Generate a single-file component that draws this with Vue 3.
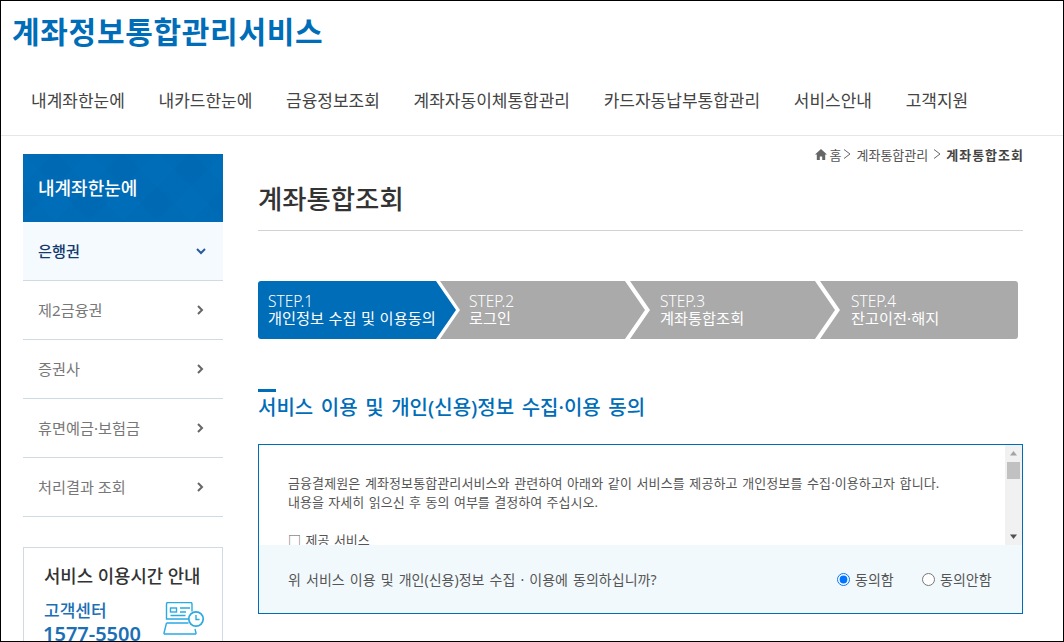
<script setup>
const nav = ['내계좌한눈에', '내카드한눈에', '금융정보조회', '계좌자동이체통합관리', '카드자동납부통합관리', '서비스안내', '고객지원']
const side = ['제2금융권', '증권사', '휴면예금·보험금', '처리결과 조회']
const steps = [
  { no: 'STEP.1', name: '개인정보 수집 및 이용동의', cls: 's1' },
  { no: 'STEP.2', name: '로그인', cls: 's2' },
  { no: 'STEP.3', name: '계좌통합조회', cls: 's3' },
  { no: 'STEP.4', name: '잔고이전·해지', cls: 's4' }
]
</script>

<template>
  <div class="page">
    <header class="head">
      <h1 class="brand">계좌정보통합관리서비스</h1>
      <nav class="gnb">
        <a v-for="n in nav" :key="n">{{ n }}</a>
      </nav>
    </header>
    <div class="body">
      <aside class="side">
        <div class="side-title">내계좌한눈에</div>
        <div class="side-item on">
          <span>은행권</span>
          <svg class="down" width="10" height="7" viewBox="0 0 10 7"><path d="M1 1l4 4 4-4" fill="none" stroke="#2a5a9c" stroke-width="2"/></svg>
        </div>
        <div v-for="s in side" :key="s" class="side-item">
          <span>{{ s }}</span>
          <svg class="right" width="7" height="10" viewBox="0 0 7 10"><path d="M1 1l4 4-4 4" fill="none" stroke="#666" stroke-width="2"/></svg>
        </div>
        <div class="info">
          <div class="info-title">서비스 이용시간 안내</div>
          <div class="info-row">
            <div class="info-text">
              <div class="info-label">고객센터</div>
              <div class="info-num">1577-5500</div>
            </div>
            <svg class="info-icon" width="42" height="34" viewBox="0 0 42 34" fill="none" stroke="#29abe2" stroke-width="1.4">
              <path d="M26 17H3.5V2a1.5 1.5 0 0 1 1.5-1.5h22.5A1.5 1.5 0 0 1 29 2v7.5"/>
              <rect x="7.5" y="6" width="6" height="4"/>
              <path d="M17 6h10M17 10h6M7.5 13.5h15"/>
              <path d="M3.5 21h22M3.5 21L1 31a.8.8 0 0 0 .8 1h30.4a.8.8 0 0 0 .8-1l-1-4"/>
              <circle cx="33" cy="17" r="7.2" stroke-width="1.7"/>
              <path d="M33 13v4.5h3.5"/>
            </svg>
          </div>
        </div>
      </aside>
      <main class="main">
        <div class="crumb">
          <svg width="12" height="11" viewBox="0 0 12 11"><path d="M6 0L0 5.5h1.8V11h3V7.5h2.4V11h3V5.5H12z" fill="#666"/></svg>
          <span class="home">홈</span>
          <svg class="sep" width="8" height="10" viewBox="0 0 8 10"><path d="M1 .5L7 5 1 9.5" fill="none" stroke="#666"/></svg>
          <span>계좌통합관리</span>
          <svg class="sep" width="8" height="10" viewBox="0 0 8 10"><path d="M1 .5L7 5 1 9.5" fill="none" stroke="#666"/></svg>
          <b>계좌통합조회</b>
        </div>
        <h2 class="title">계좌통합조회</h2>
        <div class="steps">
          <div v-for="st in steps" :key="st.no" class="step" :class="st.cls">
            <div class="no">{{ st.no }}</div>
            <div class="nm">{{ st.name }}</div>
          </div>
        </div>
        <div class="mark"></div>
        <h3 class="sub">서비스 이용 및 개인(신용)정보 수집·이용 동의</h3>
        <section class="agree">
          <div class="scrollbox">
            <div class="terms">
              <p class="lead">금융결제원은 계좌정보통합관리서비스와 관련하여 아래와 같이 서비스를 제공하고 개인정보를 수집·이용하고자 합니다.</p>
              <p>내용을 자세히 읽으신 후 동의 여부를 결정하여 주십시오.</p>
              <p class="gap">□ 제공 서비스</p>
            </div>
            <div class="bar">
              <svg width="17" height="17" viewBox="0 0 17 17"><path d="M8.5 6L5 10.5h7z" fill="#a3a3a3"/></svg>
              <div class="thumb"></div>
              <div class="track"></div>
              <svg width="17" height="17" viewBox="0 0 17 17"><path d="M8.5 11L5 6.5h7z" fill="#505050"/></svg>
            </div>
          </div>
          <div class="question">
            <span class="q">위 서비스 이용 및 개인(신용)정보 수집 · 이용에 동의하십니까?</span>
            <label class="radio r1"><input type="radio" name="ag" checked /><span>동의함</span></label>
            <label class="radio"><input type="radio" name="ag" /><span>동의안함</span></label>
          </div>
        </section>
      </main>
    </div>
  </div>
</template>

<style scoped>
.page {
  box-sizing: border-box;
  width: 1064px;
  height: 642px;
  border: 1px solid #000;
  overflow: hidden;
  background: #fff;
  font-family: "Noto Sans", "Noto Sans CJK KR", sans-serif;
  color: #555;
}
.head {
  height: 135px;
  box-sizing: border-box;
  border-bottom: 1px solid #e6e6e6;
  padding: 0 0 0 11px;
}
.brand {
  margin: 0;
  padding-top: 9px;
  font-size: 30px;
  line-height: 44px;
  height: 44px;
  font-weight: 600;
  color: #006db8;
  letter-spacing: 0.7px;
}
.gnb {
  display: flex;
  gap: 33.7px;
  margin-top: 34px;
  padding-left: 19px;
  font-size: 17px;
  line-height: 26px;
  color: #444;
}
.body {
  display: flex;
  padding: 18px 0 0 22px;
}
.side {
  width: 200px;
  flex: none;
  font-size: 15.2px;
}
.side-title {
  height: 68px;
  box-sizing: border-box;
  padding: 0 0 3px 15px;
  display: flex;
  align-items: center;
  color: #fff;
  font-size: 18px;
  font-weight: 500;
  background-color: #006db8;
  background-image:
    repeating-linear-gradient(45deg, rgba(0, 50, 110, .03) 0 24px, transparent 24px 48px),
    repeating-linear-gradient(-45deg, rgba(0, 50, 110, .03) 0 24px, transparent 24px 48px);
}
.side-item {
  height: 59px;
  box-sizing: border-box;
  border-bottom: 1px solid #cfdbe2;
  padding: 0 18px 2px 15px;
  display: flex;
  align-items: center;
  justify-content: space-between;
  color: #777;
}
.side-item svg { display: block; margin-top: 2px; }
.side-item .down { margin-right: -1px; }
.side-item .right { margin-right: 1px; }
.side-item.on {
  background: #f5fafe;
  color: #123a6e;
  font-weight: 500;
}
.info {
  margin-top: 30px;
  height: 120px;
  box-sizing: border-box;
  border: 1px solid #cfdbe2;
  padding: 15px 0 0 20px;
}
.info-title {
  font-size: 17.8px;
  line-height: 26px;
  font-weight: 500;
  color: #333;
}
.info-row {
  display: flex;
  margin-top: 11px;
}
.info-text { width: 119px; }
.info-label {
  font-size: 17px;
  line-height: 22px;
  font-weight: 500;
  color: #1d6fb5;
}
.info-num {
  font-size: 20px;
  line-height: 24px;
  font-weight: 600;
  color: #1d6fb5;
  margin-left: -1px;
}
.info-icon { margin-top: 2px; }
.main {
  width: 765px;
  margin: -8px 0 0 35px;
  flex: none;
}
.crumb {
  display: flex;
  justify-content: flex-end;
  align-items: center;
  gap: 3px;
  height: 16px;
  font-size: 13px;
  color: #555;
}
.crumb .sep { margin: 0 2px; }
.crumb .home { margin-right: -3px; }
.crumb b {
  font-weight: 700;
  color: #444;
  letter-spacing: 1px;
  margin-right: -1px;
}
.title {
  margin: 18px 0 0;
  height: 50px;
  line-height: 38px;
  font-size: 26.4px;
  font-weight: 500;
  color: #333;
  border-bottom: 1px solid #d2d2d2;
}
.steps {
  display: flex;
  width: 760px;
  height: 58px;
  margin-top: 50px;
  border-radius: 3px;
  overflow: hidden;
  line-height: 17px;
  color: #fff;
}
.no { font-size: 15.5px; font-weight: 300; }
.nm { font-size: 15.25px; word-spacing: 0.5px; white-space: nowrap; }
.step {
  box-sizing: border-box;
  height: 58px;
  padding-top: 12px;
  background: #aaa;
  flex: none;
}
.s1 {
  width: 198px;
  padding-left: 10px;
  background: #006db8;
  clip-path: polygon(0 0, 178px 0, 198px 29px, 178px 58px, 0 58px);
}
.s2 {
  width: 205px;
  margin-left: -16px;
  padding-left: 29px;
  clip-path: polygon(0 0, 185px 0, 205px 29px, 185px 58px, 0 58px, 20px 29px);
}
.s3 {
  width: 205px;
  margin-left: -15px;
  padding-left: 30px;
  clip-path: polygon(0 0, 185px 0, 205px 29px, 185px 58px, 0 58px, 20px 29px);
}
.s4 {
  width: 198px;
  margin-left: -15px;
  padding-left: 31px;
  clip-path: polygon(0 0, 198px 0, 198px 58px, 0 58px, 20px 29px);
}
.mark {
  width: 18px;
  height: 3px;
  background: #006db8;
  margin-top: 50px;
}
.sub {
  margin: 0;
  font-size: 20px;
  line-height: 32px;
  height: 52px;
  font-weight: 500;
  color: #006db8;
  word-spacing: 2.4px;
}
.agree {
  box-sizing: border-box;
  height: 170px;
  border: 1px solid #006db8;
}
.scrollbox {
  display: flex;
  height: 100px;
  overflow: hidden;
}
.terms {
  flex: 1;
  padding: 29px 0 0 29px;
  font-size: 13px;
  line-height: 19px;
  color: #555;
  word-spacing: 1.1px;
}
.terms p { margin: 0; white-space: nowrap; }
.terms .lead { letter-spacing: 0.1px; }
.terms .gap { margin-top: 19px; }
.bar {
  width: 17px;
  flex: none;
  background: #f1f1f1;
  display: flex;
  flex-direction: column;
}
.bar svg { display: block; flex: none; }
.thumb {
  margin: 0 2px;
  height: 17px;
  background: #c1c1c1;
  flex: none;
}
.track { flex: 1; }
.question {
  height: 68px;
  background: #f2f9fd;
  display: flex;
  align-items: center;
  padding-left: 29px;
  font-size: 14px;
  color: #555;
}
.q { width: 549px; word-spacing: 1.5px; white-space: nowrap; }
.radio {
  display: flex;
  align-items: center;
  gap: 4px;
}
.radio input {
  margin: 0 1px 0 0;
  width: 13px;
  height: 13px;
}
.r1 { width: 85px; }
</style>
